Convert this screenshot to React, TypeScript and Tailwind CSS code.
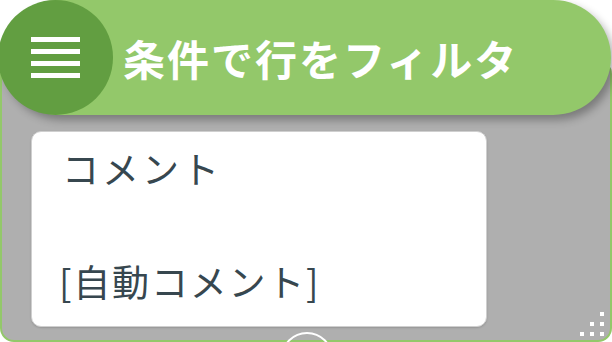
import React from "react";

export default function App() {
  return (
    <div className="w-[612px] h-[342px] bg-white overflow-hidden flex flex-col relative" style={{ fontFamily: '"Noto Sans CJK JP", "Noto Sans", sans-serif' }}>
      <div className="relative z-10 h-[115px] w-[611px] rounded-r-full rounded-l-full bg-[#93c86a] flex items-center shadow-[4px_5px_8px_rgba(0,0,0,0.3)]">
        <div className="-ml-[2px] w-[115px] h-[115px] rounded-full bg-[#629e41] flex flex-col items-center justify-center gap-[7px] shrink-0">
          <div className="w-[49px] h-[5px] bg-white" />
          <div className="w-[49px] h-[5px] bg-white" />
          <div className="w-[49px] h-[5px] bg-white" />
          <div className="w-[49px] h-[5px] bg-white" />
        </div>
        <div className="ml-[10px] text-white font-bold text-[42px] leading-none tracking-[2px]">条件で行をフィルタ</div>
      </div>
      <div className="-mt-[55px] flex-1 border-2 border-[#93c86a] rounded-[14px] bg-[#afafaf] pt-[69px] pl-[29px] relative">
        <div className="w-[456px] h-[196px] bg-white rounded-[10px] border border-[#cfcfcf] shadow-[0_1px_2px_rgba(0,0,0,0.15)] pl-[30px] pt-[14px] text-[#37474f] text-[37px] leading-[45px]">
          <div className="tracking-[3px]">コメント</div>
          <div className="mt-[68px] -ml-[3px] tracking-[1.8px]">[自動コメント]</div>
        </div>
        <div className="absolute left-[279px] top-[270px] w-[52px] h-[52px] rounded-full border-2 border-white" />
        <div className="absolute right-[6px] bottom-[4px] grid grid-cols-3 gap-[6px]">
          <div className="w-[4px] h-[4px]" />
          <div className="w-[4px] h-[4px]" />
          <div className="w-[4px] h-[4px] bg-white" />
          <div className="w-[4px] h-[4px]" />
          <div className="w-[4px] h-[4px] bg-white" />
          <div className="w-[4px] h-[4px] bg-white" />
          <div className="w-[4px] h-[4px] bg-white" />
          <div className="w-[4px] h-[4px] bg-white" />
          <div className="w-[4px] h-[4px] bg-white" />
        </div>
      </div>
    </div>
  );
}
